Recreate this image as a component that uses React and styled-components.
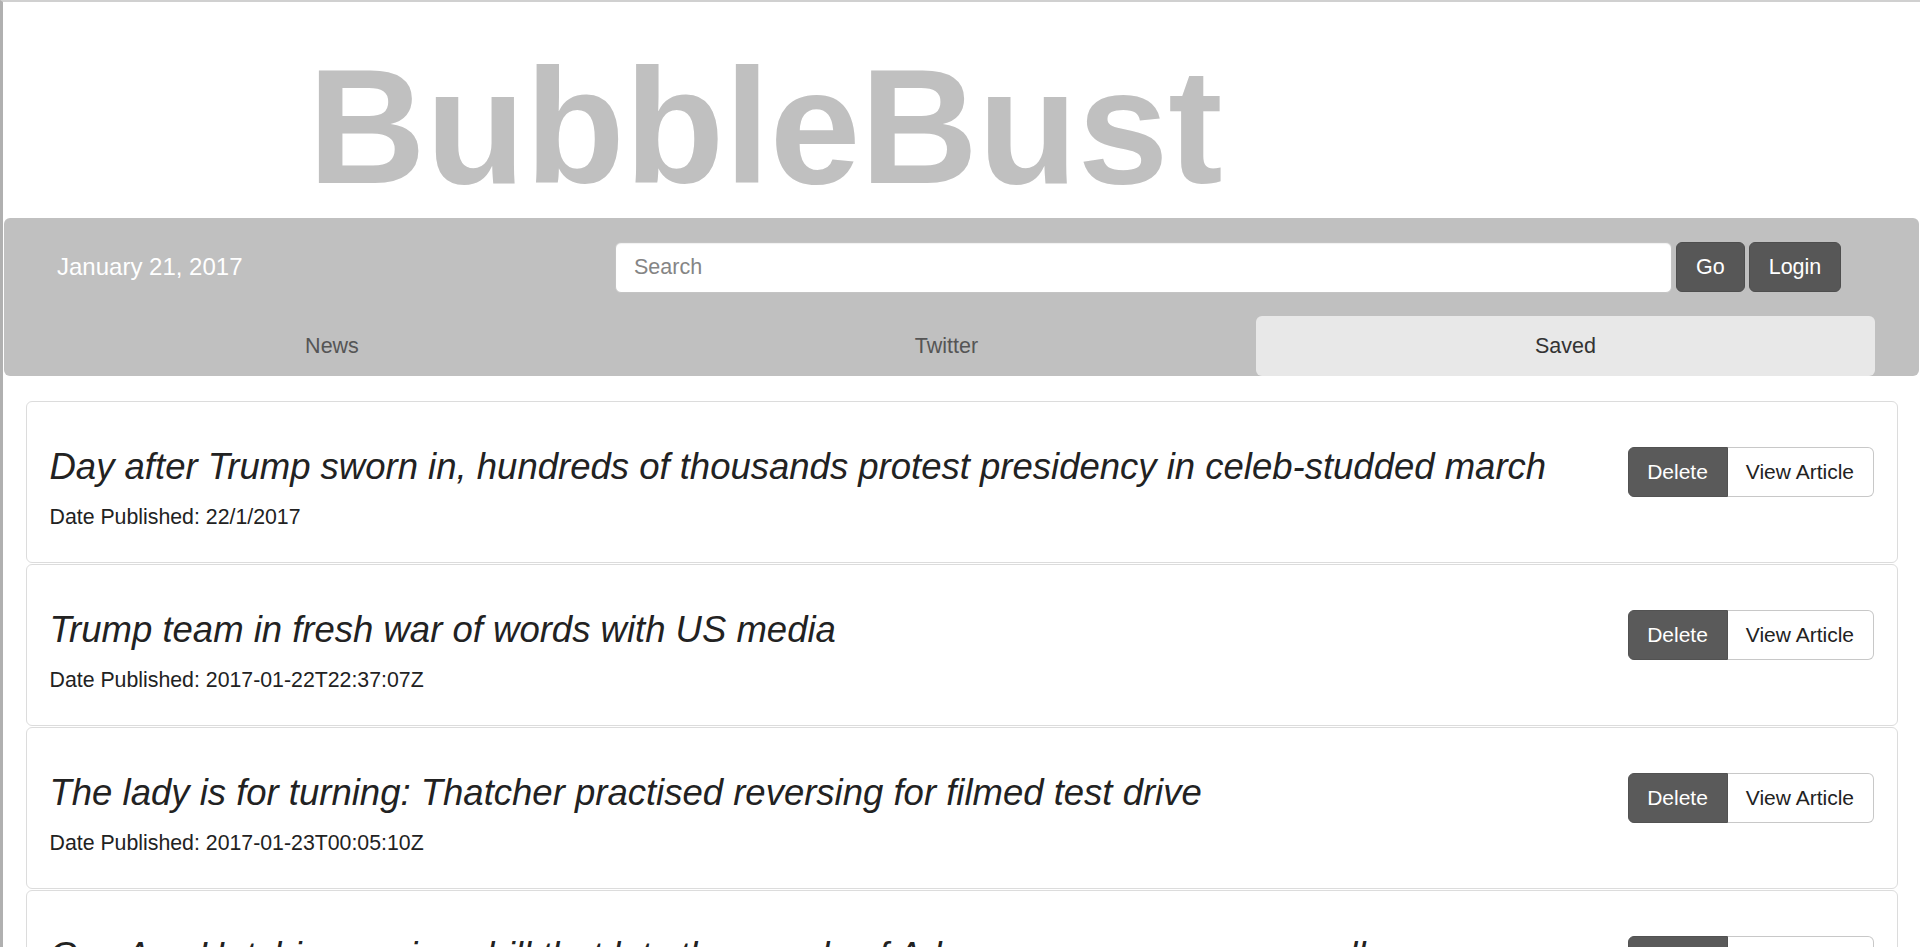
import React from "react";
import styled, { createGlobalStyle, css } from "styled-components";

const GlobalStyle = createGlobalStyle`
  html, body {
    margin: 0;
    padding: 0;
    overflow: hidden;
    background: #fff;
  }
  body {
    font-family: "Liberation Sans", Arial, Helvetica, sans-serif;
    color: #333;
  }
  *, *::before, *::after { box-sizing: border-box; }
`;

const Frame = styled.div`
  height: 947px;
  overflow: hidden;
  border-top: 2px solid #d0d0d0;
  border-left: 3px solid #b0b0b0;
  background: #fff;
`;

const Header = styled.header`
  height: 216px;
  padding: 43px 0 0 305px;
`;

const Brand = styled.h1`
  margin: 0;
  font-size: 163px;
  line-height: 163px;
  font-weight: 700;
  color: #c0c0c0;
  white-space: nowrap;
`;

const Navbar = styled.nav`
  margin: 0 1px;
  background: #c0c0c0;
  border-radius: 6px;
  display: flex;
  flex-direction: column;
`;

const TopRow = styled.div`
  height: 98px;
  display: flex;
  align-items: center;
  padding-left: 53px;
`;

const DateText = styled.div`
  flex: 0 0 558px;
  color: #fff;
  font-size: 24px;
  line-height: 30px;
`;

const SearchInput = styled.input`
  flex: 0 0 1057px;
  height: 51px;
  padding: 0 18px;
  border: 1px solid #c4c4c4;
  border-radius: 6px;
  background: #fff;
  font-family: inherit;
  font-size: 21.5px;
  color: #333;
  outline: none;
  box-shadow: inset 0 1px 1px rgba(0, 0, 0, 0.06);
  &::placeholder { color: #858585; }
`;

const NavButton = styled.button`
  margin-left: 4px;
  height: 50px;
  padding: 0 19px;
  border: 1px solid #4e4e4e;
  border-radius: 6px;
  background: #575757;
  color: #fff;
  font-family: inherit;
  font-size: 21.5px;
  line-height: 30px;
  cursor: pointer;
`;

const Tabs = styled.ul`
  list-style: none;
  margin: 0;
  padding: 0 0 0 23px;
  display: grid;
  grid-template-columns: 610px 619px 619px;
  height: 60px;
`;

const Tab = styled.li`
  padding: 15px 10px;
  text-align: center;
  font-size: 21.5px;
  line-height: 30px;
  border-radius: 6px;
  color: ${(p) => (p.$active ? "#333" : "#555")};
  background: ${(p) => (p.$active ? "#e8e8e8" : "transparent")};
`;

const List = styled.div`
  margin: 25px 22px 0 23px;
  display: flex;
  flex-direction: column;
  gap: 1px;
`;

const Card = styled.div`
  display: flex;
  justify-content: space-between;
  align-items: flex-start;
  padding: 15px 23px 15px 22.5px;
  border: 1px solid #dcdcdc;
  border-radius: 6px;
  background: #fff;
`;

const CardBody = styled.div`
  min-width: 0;
`;

const ArticleTitle = styled.h3`
  margin: 30px 0 15px;
  font-size: 36.5px;
  line-height: 40px;
  font-weight: 400;
  font-style: italic;
  color: #222;
  white-space: nowrap;
`;

const Published = styled.p`
  margin: 0 0 15px;
  font-size: 21.3px;
  line-height: 30px;
  color: #222;
`;

const BtnGroup = styled.div`
  flex: none;
  display: flex;
  margin-top: 30px;
`;

const Btn = styled.button`
  padding: 9px 19px 9px 18px;
  font-family: inherit;
  font-size: 21px;
  line-height: 30px;
  cursor: pointer;
  ${(p) =>
    p.$dark
      ? css`
          background: #5a5a5a;
          color: #fff;
          border: 1px solid #525252;
          border-radius: 6px 0 0 6px;
        `
      : css`
          background: #fff;
          color: #222;
          border: 1px solid #c8c8c8;
          border-left: none;
          border-radius: 0 6px 6px 0;
        `}
`;

const articles = [
  {
    title:
      "Day after Trump sworn in, hundreds of thousands protest presidency in celeb-studded march",
    date: "22/1/2017",
  },
  {
    title: "Trump team in fresh war of words with US media",
    date: "2017-01-22T22:37:07Z",
  },
  {
    title:
      "The lady is for turning: Thatcher practised reversing for filmed test drive",
    date: "2017-01-23T00:05:10Z",
  },
  {
    title:
      "Gov Asa Hutchinson signs bill that lets thousands of Arkansans carry guns on college campuses",
    date: "2017-01-23T01:12:44Z",
  },
];

export default function App() {
  return (
    <>
      <GlobalStyle />
      <Frame>
        <Header>
          <Brand>BubbleBust</Brand>
        </Header>
        <Navbar>
          <TopRow>
            <DateText>January 21, 2017</DateText>
            <SearchInput placeholder="Search" />
            <NavButton>Go</NavButton>
            <NavButton>Login</NavButton>
          </TopRow>
          <Tabs>
            <Tab>News</Tab>
            <Tab>Twitter</Tab>
            <Tab $active>Saved</Tab>
          </Tabs>
        </Navbar>
        <List>
          {articles.map((a) => (
            <Card key={a.title}>
              <CardBody>
                <ArticleTitle>{a.title}</ArticleTitle>
                <Published>Date Published: {a.date}</Published>
              </CardBody>
              <BtnGroup>
                <Btn $dark>Delete</Btn>
                <Btn>View Article</Btn>
              </BtnGroup>
            </Card>
          ))}
        </List>
      </Frame>
    </>
  );
}
